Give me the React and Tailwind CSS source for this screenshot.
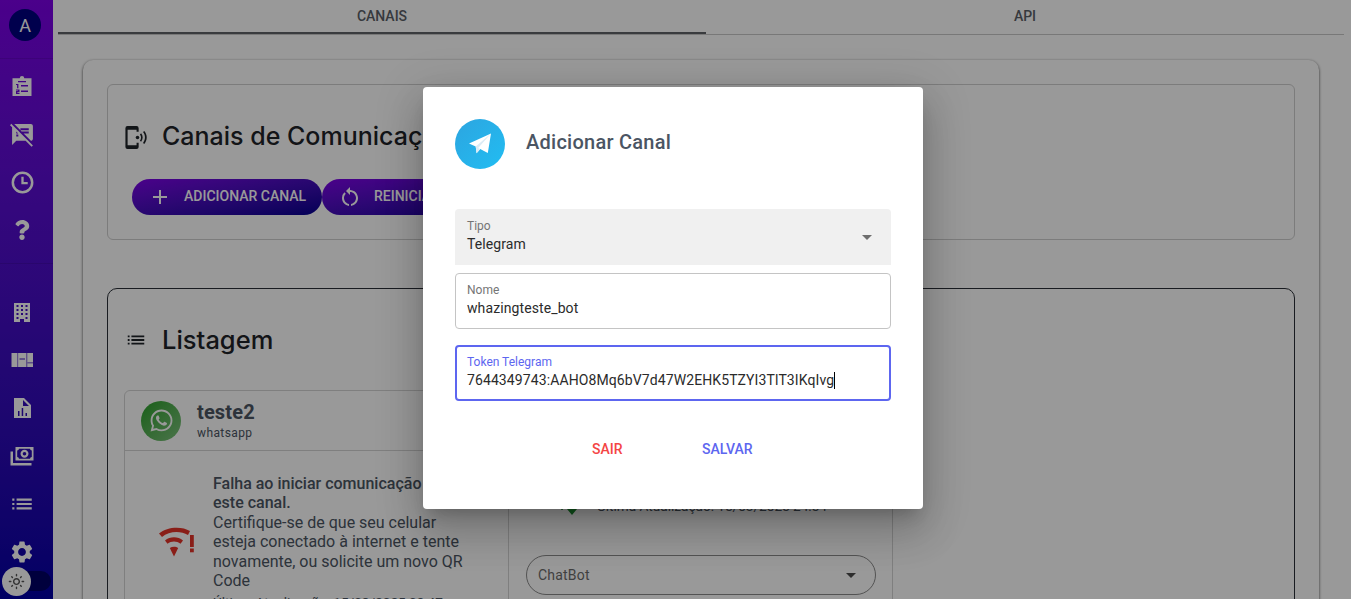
import React from "react";
import { MdSpeakerNotesOff, MdList, MdSettings, MdAdd, MdRestartAlt, MdArrowDropDown, MdOutlineLightMode } from "react-icons/md";
import { FaWhatsapp, FaQuestion } from "react-icons/fa";

const ClipIcon = () => (
  <svg viewBox="0 0 24 24" className="w-6 h-6" fill="currentColor">
    <path fillRule="evenodd" d="M12 2a2.400 2.400 0 0 1 2.300 2.200H21.500V22H2.500V4.200H9.700A2.400 2.400 0 0 1 12 2ZM8 7v1.200h8V7H8ZM6 10v1h1.100v3.200h1.300V10H6ZM11 11v1.500h7V11h-7ZM6 15.500v1h1.800v.6H6V20h3.500v-1H7.400v-.7h2.100v-2.800H6ZM11 16.500V18h7v-1.500h-7Z" />
  </svg>
);
const ClockIcon = () => (
  <svg viewBox="0 0 24 24" className="w-[25px] h-[25px]" fill="none" stroke="currentColor">
    <circle cx="12" cy="12" r="9.300" strokeWidth="2.400" />
    <path d="M12 6.500V12.500H17" strokeWidth="2.200" />
  </svg>
);
const BuildingIcon = () => (
  <svg viewBox="0 0 24 24" className="w-6 h-6" fill="currentColor">
    <path fillRule="evenodd" d="M4 3h16v19h-6v-3h-4v3H4V3Zm2.500 2v2h2V5h-2Zm4.500 0v2h2V5h-2Zm4.500 0v2h2V5h-2Zm-9 4v2h2V9h-2Zm4.500 0v2h2V9h-2Zm4.500 0v2h2V9h-2Zm-9 4v2h2v-2h-2Zm4.500 0v2h2v-2h-2Zm4.500 0v2h2v-2h-2Zm-9 4v2h2v-2h-2Zm9 0v2h2v-2h-2Z" />
  </svg>
);
const QuiltIcon = () => (
  <svg viewBox="0 0 24 24" className="w-6 h-6" fill="currentColor">
    <path fillRule="evenodd" d="M1.500 5H23v14H1.500V5Zm6 0v14h.6V5h-.6Zm2 5.600v.9h5.500v-.9H9.500Zm7-5.600v14h.7V5h-.7Zm1 9.400v.9H23v-.9h-5.500Z" />
  </svg>
);
const FileChartIcon = () => (
  <svg viewBox="0 0 24 24" className="w-6 h-6" fill="currentColor">
    <path fillRule="evenodd" d="M4 2h10l7 7v13H4V2Zm9 2v6h6l-6-6ZM8 15v5h1.500v-5H8Zm3.700-3v8h1.500v-8h-1.500Zm3.800 5v3H17v-3h-1.500Z" />
  </svg>
);
const CashIcon = () => (
  <svg viewBox="0 0 24 24" className="w-6 h-6" fill="currentColor">
    <path fillRule="evenodd" d="M5.500 3H23.500V16.500H5.500V3ZM9 4.800a2 2 0 0 1-1.800 1.800v6.300A2 2 0 0 1 9 14.700h11a2 2 0 0 1 1.800-1.800V6.600A2 2 0 0 1 20 4.800H9ZM14.500 5.800c2.200 0 4 1.800 4 4s-1.800 4-4 4-4-1.800-4-4 1.800-4 4-4Zm0 2.200a1.800 1.800 0 1 0 0 3.600 1.800 1.800 0 0 0 0-3.600Z" />
    <path d="M0.500 7.500H3V19H21.500V21.500H0.500V7.500Z" />
  </svg>
);
const PhoneSignal = () => (
  <svg viewBox="0 0 24 24" className="w-[25px] h-[25px]" fill="currentColor">
    <path fillRule="evenodd" d="M2.400 1h8.700a2 2 0 0 1 2 2v3.500h-2V4.500H2.500v15h8.600v-2.500h2V21a2 2 0 0 1-2 2H2.400a2 2 0 0 1-2-2V3a2 2 0 0 1 2-2Z" />
    <circle cx="12" cy="12" r="1.700" />
    <path d="M15.500 8c2 2.400 2 5.600 0 8l-1.200-1c1.500-1.900 1.500-4.100 0-6l1.200-1ZM18.500 5.800c3.200 3.800 3.200 8.600 0 12.400l-1.200-1c2.500-3.100 2.500-7.300 0-10.400l1.200-1Z" />
  </svg>
);
const WifiAlert = () => (
  <svg viewBox="0 0 36 30" className="w-9 h-[30px]" fill="#e53328">
    <path d="M0 6.500C8-0.500 23-1 31 4l-2 4C21.500 3.500 10 4 3 10L0 6.500Z" />
    <path d="M6 13.500c5-4.200 13-4.200 18 0l-2.500 3.300c-3.800-3-9.200-3-13 0L6 13.500Z" />
    <path d="M10.800 21c2.500-1.800 6-1.800 8.400 0L15 29.500l-4.200-8.500Z" />
    <rect x="31" y="8" width="3.800" height="12" />
    <rect x="31" y="21.500" width="3.800" height="3.800" />
  </svg>
);
const TelegramPlane = () => (
  <svg viewBox="0 0 24 24" className="w-[24px] h-[24px]">
    <path fill="#ffffff" d="M23 1.500 19.800 21l-7.600-4-3.600 4.200-.9-6.800L1 11.500 23 1.500Z" />
    <path fill="#dcebf5" d="M23 1.500 7.700 14.400l.9 6.800 3.600-4.200-2-1L23 1.500Z" />
  </svg>
);

const TopNav = [ClipIcon, () => <MdSpeakerNotesOff size={25} />, ClockIcon, () => <FaQuestion size={20} />];
const BottomNav = [BuildingIcon, QuiltIcon, FileChartIcon, CashIcon, () => <MdList size={26} />, () => <MdSettings size={26} />];

function NavItem({ Icon }) {
  return (
    <div className="h-12 w-[44px] flex items-center justify-center text-white">
      <Icon />
    </div>
  );
}

function Sidebar() {
  return (
    <aside className="w-[53px] shrink-0 h-full bg-gradient-to-b from-[#7d00e8] to-[#0000a6] flex flex-col">
      <div className="h-[59px] shrink-0 border-b border-black/10 pl-[9px] pt-[9px]">
        <div className="w-8 h-8 rounded-full bg-[#000080] text-white flex items-center justify-center text-[18px] font-['Roboto',sans-serif]">A</div>
      </div>
      <div className="pt-[3px] pb-[9px] border-b border-black/10">
        {TopNav.map((I, k) => <NavItem key={k} Icon={I} />)}
      </div>
      <div className="pt-6">
        {BottomNav.map((I, k) => <NavItem key={k} Icon={I} />)}
      </div>
    </aside>
  );
}

function Background() {
  return (
    <main className="flex-1 min-w-0 h-full overflow-hidden pl-[5px] pr-[7px]">
      <div className="flex h-[35px] border-b border-[#c8c8c8] text-[14px] font-medium text-[#5b6068]">
        <div className="w-[648px] h-[34px] flex items-center justify-center pt-[1px] border-b-2 border-[#5f6368]">CANAIS</div>
        <div className="flex-1 h-[34px] flex items-center justify-center pt-[1px] pb-[2px]">API</div>
      </div>
      <section className="mt-[25px] ml-[25px] mr-[25px] rounded-[10px] bg-white shadow-[0_1px_3px_rgba(0,0,0,0.75)] p-6 pb-0 h-[560px]">
        <div className="h-[156px] border border-[#cfcfcf] rounded-[6px] pl-[17px] pt-[39px]">
          <div className="flex items-center gap-[12px] text-[#1f2329] h-[26px]">
            <PhoneSignal />
            <h1 className="text-[25px] font-medium font-['Inter',sans-serif] whitespace-nowrap">Canais de Comunicação</h1>
          </div>
          <div className="flex mt-[29px] ml-[7px] text-[14px] font-medium text-white">
            <button className="w-[190px] h-9 rounded-full bg-gradient-to-br from-[#7d00e8] to-[#000090] flex items-center pl-[16px] pb-[1px]">
              <MdAdd size={24} className="mr-[12px] w-6" />
              ADICIONAR CANAL
            </button>
            <button className="w-[220px] h-9 rounded-full bg-gradient-to-br from-[#7d00e8] to-[#000090] flex items-center pl-[16px] pb-[1px] whitespace-nowrap">
              <MdRestartAlt size={24} className="mr-3" />
              REINICIAR CONEXÕES
            </button>
          </div>
        </div>
        <div className="mt-[48px] border border-[#2b3038] rounded-[10px] h-[400px] px-4 pt-[33px]">
          <div className="flex items-center gap-[15px] text-[#1f2329] h-[36px]">
            <MdList size={22} className="ml-[1px]" />
            <h2 className="text-[25.5px] font-medium font-['Inter',sans-serif]">Listagem</h2>
          </div>
          <div className="flex mt-[32px] text-[#4b5563]">
            <article className="w-[385px] h-[240px] border border-[#d4d4d4] rounded-t-[6px]">
              <div className="h-[60px] border-b border-[#d4d4d4] flex items-center pl-4 gap-4">
                <div className="w-10 h-10 rounded-full bg-gradient-to-br from-[#25a025] to-[#7cc27c] flex items-center justify-center text-white">
                  <FaWhatsapp size={25} />
                </div>
                <div>
                  <div className="text-[20px] font-bold leading-[24px] tracking-[0.15px]">teste2</div>
                  <div className="text-[12px] leading-[18px] tracking-[0.4px]">whatsapp</div>
                </div>
              </div>
              <div className="flex pt-[23px] pl-[34px] pr-[30px] text-[#4b5563]">
                <div className="w-[37px] shrink-0 mr-[17px] pt-[53px]"><WifiAlert /></div>
                <div className="text-[16px] leading-[19.4px]">
                  <div className="font-medium">Falha ao iniciar comunicação para este canal.</div>
                  <div>Certifique-se de que seu celular esteja conectado à internet e tente novamente, ou solicite um novo QR Code</div>
                  <div className="text-[13.6px] mt-[3px] whitespace-nowrap">Última Atualização: 15/03/2025 09:47</div>
                </div>
              </div>
            </article>
            <article className="w-[384px] h-[240px] border border-[#d4d4d4] border-l-0 rounded-t-[6px]">
              <div className="h-[60px] border-b border-[#d4d4d4]" />
              <div className="pt-[44px] pl-[50px] h-[105px] flex gap-[18px] whitespace-nowrap">
                <svg viewBox="0 0 20 20" className="w-5 h-5 shrink-0" fill="#1a8f2e">
                  <circle cx="3" cy="14" r="1" />
                  <path d="M9 4h2.500v10H9zM14 4h2.500v10H14zM8 14h10l-5 6z" />
                </svg>
                <span className="text-[13.6px] leading-[19px] pt-[2px]">Última Atualização: 15/03/2025 24:54</span>
              </div>
              <div className="ml-[17px] mr-[16px] -mt-[1px] h-10 rounded-full border border-[#8a8a8a] flex items-center justify-between pl-[11px] pr-[12px] text-[14px] text-[#6b6b6b]">
                <span className="tracking-[0.2px]">ChatBot</span>
                <MdArrowDropDown size={24} className="text-[#4b4b4b]" />
              </div>
            </article>
          </div>
        </div>
      </section>
    </main>
  );
}

function Field({ label, value, focused, caret }) {
  return (
    <div className={focused
      ? "h-14 rounded-[4px] border-2 border-[#5d66f0] px-[10px] pt-[7px]"
      : "h-14 rounded-[4px] border border-[#c4c4c4] px-[11px] pt-[8px]"}>
      <div className={focused ? "text-[12px] leading-[16px] text-[#5d66f0]" : "text-[12px] leading-[16px] text-[#757575]"}>{label}</div>
      <div className="text-[14px] leading-[20px] tracking-[0.1px] text-[#2b2b2b] flex items-center">
        {value}
        {caret && <span className="inline-block w-px h-[17px] bg-black" />}
      </div>
    </div>
  );
}

function Modal() {
  return (
    <div className="absolute left-[423px] top-[87px] w-[500px] h-[422px] bg-white rounded-[4px] shadow-[0_11px_15px_-7px_rgba(0,0,0,0.2),0_24px_38px_3px_rgba(0,0,0,0.14),0_9px_46px_8px_rgba(0,0,0,0.12)] px-8 pt-8">
      <div className="flex items-center h-[50px] gap-[21px]">
        <div className="w-[50px] h-[50px] rounded-full bg-gradient-to-br from-[#2ca5e0] to-[#20bdf2] flex items-center justify-center pr-[1px]">
          <TelegramPlane />
        </div>
        <h3 className="text-[20px] font-medium text-[#4b5563] tracking-[0.25px] -mt-[4px]">Adicionar Canal</h3>
      </div>
      <div className="mt-10 flex flex-col">
        <div className="h-14 bg-[#f0f0f0] rounded-t-[4px] px-3 pt-[9px] relative">
          <div className="text-[12px] leading-[16px] text-[#757575]">Tipo</div>
          <div className="text-[14px] leading-[20px] tracking-[0.1px] text-[#2b2b2b]">Telegram</div>
          <MdArrowDropDown size={24} className="absolute right-3 top-4 text-[#6e6e6e]" />
        </div>
        <div className="mt-2"><Field label="Nome" value="whazingteste_bot" /></div>
        <div className="mt-4"><Field label="Token Telegram" value="7644349743:AAHO8Mq6bV7d47W2EHK5TZYI3TlT3IKqIvg" focused caret /></div>
      </div>
      <div className="flex mt-[38px] text-[14px] font-medium leading-[20px] ml-[137px]">
        <span className="text-[#f44545] w-[30px] text-center">SAIR</span>
        <span className="text-[#5d66f0] ml-[80px]">SALVAR</span>
      </div>
    </div>
  );
}

export default function App() {
  return (
    <div className="relative w-[1351px] h-[599px] overflow-hidden bg-white font-['Roboto',sans-serif]">
      <div className="flex h-full">
        <Sidebar />
        <Background />
      </div>
      <div className="absolute left-[2px] top-[568px] w-[47px] h-[26px]">
        <div className="absolute left-[12px] top-[3px] w-[37px] h-[20px] rounded-full bg-[#000066]" />
        <div className="absolute left-0 top-0 w-[29px] h-[29px] -mt-[1px] rounded-full bg-white flex items-center justify-center text-[#555]">
          <MdOutlineLightMode size={17} />
        </div>
      </div>
      <div className="absolute inset-0 bg-black/40" />
      <Modal />
    </div>
  );
}
